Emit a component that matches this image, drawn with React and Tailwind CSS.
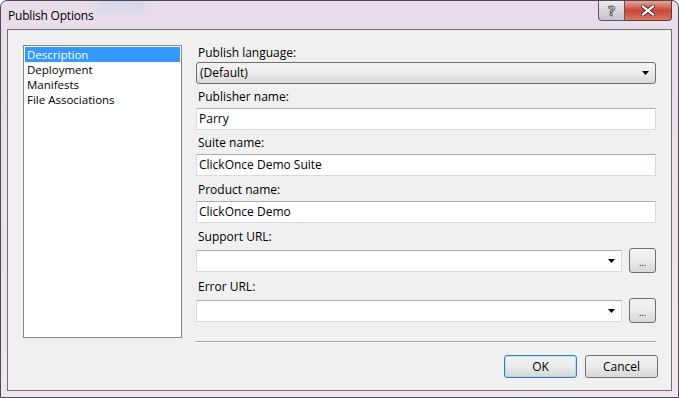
import React from "react";

const Arrow = () => (
    <svg width="7" height="4" viewBox="0 0 7 4" className="shrink-0">
        <path d="M0 0h7L3.5 4z" fill="#000" />
    </svg>
);

const Label = ({ children, className = "" }) => (
    <div className={`h-[16px] leading-[16px] pl-[2px] ${className}`}>{children}</div>
);

const TextBox = ({ value }) => (
    <div className="h-[22px] bg-white border border-[#d5dbe3] border-t-[#abadb3] flex items-center pl-[2px]">{value}</div>
);

const Combo = () => (
    <div className="flex items-center gap-[7px] h-[25px]">
        <div className="flex-1 h-[22px] bg-white border border-[#d5dbe3] border-t-[#abadb3] flex items-center justify-end pr-[6px]">
            <Arrow />
        </div>
        <button className="w-[27px] h-[25px] rounded-[3px] border border-[#707070] bg-gradient-to-b from-[#f2f2f2] via-[#ebebeb] to-[#d6d6d6] text-[9px] leading-none pt-[4px]">...</button>
    </div>
);

const App = () => {
    const items = ["Description", "Deployment", "Manifests", "File Associations"];
    return (
        <div
            className="w-[679px] h-[398px] rounded-t-[7px] border border-[#4a4a55] bg-gradient-to-b from-[#e8dde9] via-[#ece3ed] to-[#efe6ef] flex flex-col text-[12px] text-black overflow-hidden"
            style={{ fontFamily: '"Open Sans", "Noto Sans", sans-serif' }}
        >
            <div className="h-[28px] flex items-start relative shrink-0">
                <div className="absolute left-[95px] top-[-6px] w-[50px] h-[16px] rounded-full bg-[#b4cbf0] opacity-40 blur-[6px]" />
                <div className="relative pl-[7px] pt-[6px] text-[12px] tracking-[-0.2px]">Publish Options</div>
                <div className="ml-auto mr-[6px] flex">
                    <div className="w-[27px] h-[20px] rounded-bl-[4px] border border-t-0 border-[#5a5a65] bg-gradient-to-b from-[#eeeaf0] via-[#d9d4dc] to-[#c9c4cc] flex items-center justify-center text-[14px] font-bold text-white" style={{ WebkitTextStroke: "1px #5a5a5a" }}>?</div>
                    <div className="w-[47px] h-[20px] rounded-br-[4px] border border-t-0 border-l-0 border-[#5a3a35] bg-gradient-to-b from-[#e5a594] via-[#c7453a] to-[#d77a62] flex items-center justify-center">
                        <svg width="14" height="11" viewBox="0 0 14 11">
                            <path d="M2 1.5L12 9.5M12 1.5L2 9.5" stroke="#4a2a28" strokeWidth="4" strokeLinecap="square" />
                            <path d="M2 1.5L12 9.5M12 1.5L2 9.5" stroke="#fff" strokeWidth="2.2" strokeLinecap="square" />
                        </svg>
                    </div>
                </div>
            </div>

            <div className="mx-[6px] mb-[6px] flex-1 border border-[#707078] bg-[#f0f0f0] flex pt-[15px] pl-[15px] pr-[15px]">
                <div className="w-[159px] h-[293px] border border-[#828790] bg-white p-[1px] shrink-0">
                    {items.map((it, i) => (
                        <div key={it} className={`h-[15px] leading-[15px] text-[11.5px] pl-[2px] ${i === 0 ? "bg-[#3399ff] text-white" : ""}`}>
                            {it}
                        </div>
                    ))}
                </div>

                <div className="flex-1 ml-[14px] flex flex-col">
                    <Label>Publish language:</Label>
                    <div className="mt-[1px] h-[22px] rounded-[3px] border border-[#707070] bg-gradient-to-b from-[#f3f3f3] via-[#ebebeb] to-[#d9d9d9] flex items-center pl-[3px] pr-[6px]">
                        <span className="flex-1">(Default)</span>
                        <Arrow />
                    </div>
                    <Label className="mt-[5px] mb-[3px]">Publisher name:</Label>
                    <TextBox value="Parry" />
                    <Label className="mt-[5px] mb-[3px]">Suite name:</Label>
                    <TextBox value="ClickOnce Demo Suite" />
                    <Label className="mt-[6px] mb-[3px]">Product name:</Label>
                    <TextBox value="ClickOnce Demo" />
                    <Label className="mt-[6px] mb-[3px]">Support URL:</Label>
                    <Combo />
                    <Label className="mt-[6px] mb-[3px]">Error URL:</Label>
                    <Combo />
                    <div className="mt-[18px] h-px bg-[#a0a0a0] border-b border-white box-content" />
                    <div className="mt-[12px] -mr-[2px] flex justify-end gap-[8px]">
                        <button className="w-[73px] h-[23px] rounded-[3px] border border-[#3c7fb1] bg-gradient-to-b from-[#f2f2f2] via-[#ebebeb] to-[#d6d6d6] shadow-[inset_0_0_0_1px_#48d8fb66]">OK</button>
                        <button className="w-[73px] h-[23px] rounded-[3px] border border-[#707070] bg-gradient-to-b from-[#f2f2f2] via-[#ebebeb] to-[#d6d6d6]">Cancel</button>
                    </div>
                </div>
            </div>
        </div>
    );
};

export default App;
